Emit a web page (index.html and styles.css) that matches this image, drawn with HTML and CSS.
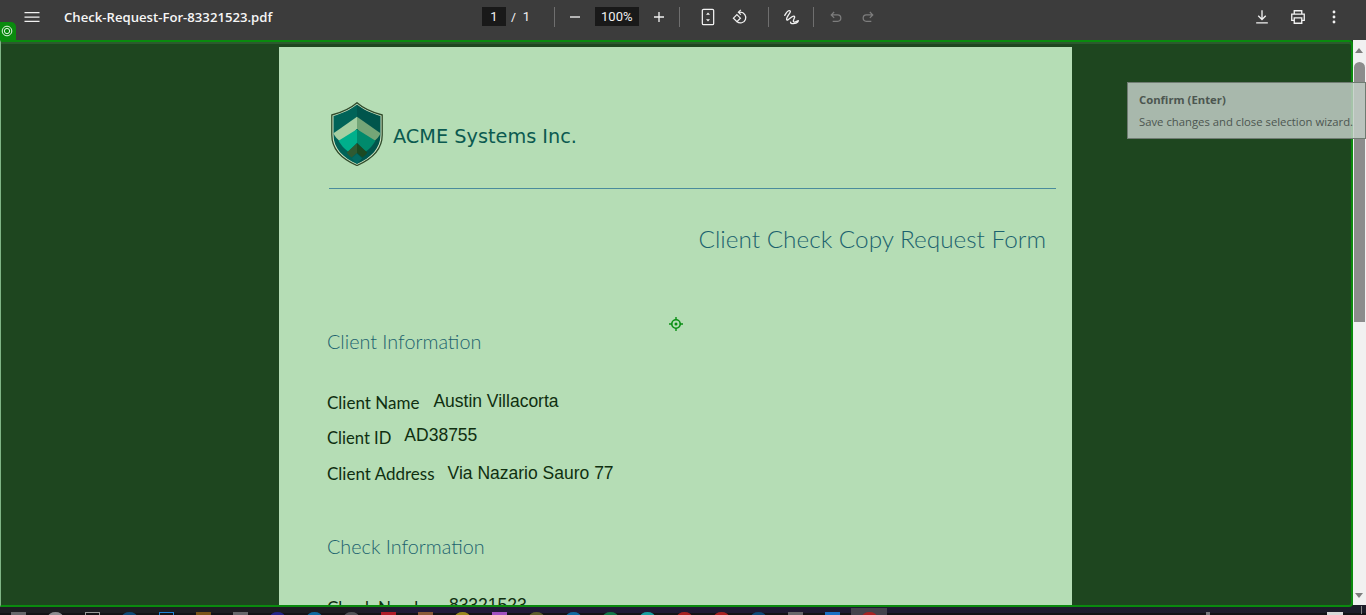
FILE: index.html
```html
<!DOCTYPE html>
<html lang="en">
<head>
    <meta charset="UTF-8">
    <title>Check-Request-For-83321523.pdf</title>
    <link rel="stylesheet" href="styles.css">
</head>
<body>
    <div class="app">
        <header class="toolbar">
            <div class="tb-left">
                <button class="tb-btn">
                    <svg viewBox="0 0 24 24"><path d="M3 6h18v1.5H3zM3 11.25h18v1.5H3zM3 16.5h18V18H3z" fill="currentColor"/></svg>
                </button>
                <span class="doc-title">Check-Request-For-83321523.pdf</span>
            </div>
            <div class="tb-mid">
                <span class="tb-input page-input">1</span>
                <span class="page-slash">/</span>
                <span class="page-total">1</span>
                <span class="tb-sep sep-zoom"></span>
                <button class="tb-btn">
                    <svg viewBox="0 0 24 24"><path d="M6 11.2h12v1.6H6z" fill="currentColor"/></svg>
                </button>
                <span class="tb-input zoom-input">100%</span>
                <button class="tb-btn">
                    <svg viewBox="0 0 24 24"><path d="M11.2 6h1.6v5.2H18v1.6h-5.2V18h-1.6v-5.2H6v-1.6h5.2z" fill="currentColor"/></svg>
                </button>
                <span class="tb-sep"></span>
                <button class="tb-btn">
                    <svg viewBox="0 0 24 24" fill="none" stroke="currentColor"><rect x="5.2" y="2.8" width="13.6" height="18.4" rx="1.5" stroke-width="1.5"/><path d="M12 6.5l-2.4 2.7h4.8zM12 17.5l-2.4-2.7h4.8z" fill="currentColor" stroke="none"/></svg>
                </button>
                <button class="tb-btn">
                    <svg viewBox="0 0 24 24" fill="none" stroke="currentColor" stroke-width="1.5"><path d="M10.5 6.3h2a6.4 6.4 0 1 1-4.2 11.2"/><path d="M13 3.4l-3 2.9 3 2.9" stroke-width="1.4"/><path d="M8.3 9.2l4.2 4.2-4.2 4.2-4.2-4.2z"/></svg>
                </button>
                <span class="tb-sep sep-draw"></span>
                <button class="tb-btn">
                    <svg viewBox="0 0 24 24" fill="none" stroke="currentColor" stroke-width="1.6" stroke-linecap="round" stroke-linejoin="round"><path d="M4.5 10C6.5 6.5 9 3.5 10.8 4.5c2.2 1.4-5 7.5-4 10.5.9 2.7 6-4.5 8.700-4 2.700.5-1.700 4.800-.5 6.500 1 1.400 5.800-1.200 5.800-1.200s-.2 3.700-5.800 3.700c-2 0-3.500-.8-3.500-1.800"/></svg>
                </button>
                <span class="tb-sep sep-undo"></span>
                <button class="tb-btn is-off">
                    <svg viewBox="0 0 24 24" fill="none" stroke="currentColor" stroke-width="1.5"><path d="M9.8 6L6.3 9.5l3.5 3.5M6.5 9.5H14a3.8 3.8 0 0 1 0 7.600H8"/></svg>
                </button>
                <button class="tb-btn is-off">
                    <svg viewBox="0 0 24 24" fill="none" stroke="currentColor" stroke-width="1.5"><path d="M14.2 6l3.500 3.500-3.500 3.500M17.500 9.500H10a3.800 3.800 0 0 0 0 7.600h6"/></svg>
                </button>
            </div>
            <div class="tb-right">
                <button class="tb-btn">
                    <svg viewBox="0 0 24 24" fill="none" stroke="currentColor" stroke-width="1.6"><path d="M12 4v10.500M7.500 10.500l4.500 4.500 4.500-4.500M5 19h14"/></svg>
                </button>
                <button class="tb-btn">
                    <svg viewBox="0 0 24 24" fill="none" stroke="currentColor" stroke-width="1.6"><path d="M7.500 8V4.500h9V8M7.500 16H4.500V8.500h15V16h-3"/><path d="M7.500 13h9v6.500h-9z"/></svg>
                </button>
                <button class="tb-btn">
                    <svg viewBox="0 0 24 24"><circle cx="12" cy="6" r="1.7" fill="currentColor"/><circle cx="12" cy="12" r="1.7" fill="currentColor"/><circle cx="12" cy="18" r="1.7" fill="currentColor"/></svg>
                </button>
            </div>
        </header>

        <main class="viewer">
            <div class="canvas">
                <article class="page">
                    <div class="brand">
                        <svg class="shield" viewBox="0 0 52 64">
                            <path d="M26 .7C20 6 10 10.500 .8 13V33c0 14 10 24 25.200 30.500C41 57 51.200 47 51.200 33V13C42 10.500 32 6 26 .7z" fill="#cfe6c4" stroke="#2f4a2a" stroke-width="1.300"/>
                            <path d="M26 2.500C20 7.500 11 11.500 2.500 14V33c0 13 9.500 23 23.500 29z" fill="#006358"/>
                            <path d="M26 2.500C32 7.500 41 11.500 49.500 14V33c0 13-9.500 23-23.500 29z" fill="#00554c"/>
                            <path d="M2.500 31.300L26 14.700v11.600L14 43C8 39 4.500 36 2.500 31.300z" fill="#a6cfa2"/>
                            <path d="M49.500 31.300L26 14.700v11.600L38 43c6-4 9.500-7 11.500-11.700z" fill="#74a577"/>
                            <path d="M7.500 38.700L26 27.300v13.400L17.300 49.700C13 46.500 10 43 7.500 38.700z" fill="#00b08c"/>
                            <path d="M44.500 38.700L26 27.300v13.400L34.700 49.700C39 46.500 42 43 44.500 38.700z" fill="#008a6c"/>
                            <path d="M15.700 50.500L26 41.300V51L20.500 55.500C18.500 54 17 52.500 15.700 50.500z" fill="#2f5a32"/>
                            <path d="M36.300 50.500L26 41.300V51L31.500 55.500C33.500 54 35 52.500 36.300 50.500z" fill="#1c4a22"/>
                            <path d="M21 56.300l5-4.800 5 4.800c-1.500 2-3 3.700-5 5.500-2-1.800-3.500-3.500-5-5.500z" fill="#046a62"/>
                        </svg>
                        <span class="brand-name">ACME Systems Inc.</span>
                    </div>
                    <div class="brand-rule"></div>
                    <h1 class="form-title">Client Check Copy Request Form</h1>

                    <h2 class="section-title first">Client Information</h2>
                    <div class="field field-name">
                        <span class="field-label">Client Name</span>
                        <span class="field-value">Austin Villacorta</span>
                    </div>
                    <div class="field field-id">
                        <span class="field-label">Client ID</span>
                        <span class="field-value">AD38755</span>
                    </div>
                    <div class="field field-address">
                        <span class="field-label">Client Address</span>
                        <span class="field-value">Via Nazario Sauro 77</span>
                    </div>

                    <h2 class="section-title second">Check Information</h2>
                    <div class="field field-check">
                        <span class="field-label">Check Number</span>
                        <span class="field-value">83321523</span>
                    </div>
                </article>
            </div>
            <div class="scrollbar">
                <span class="arrow-up"></span>
                <span class="thumb"></span>
                <span class="arrow-down"></span>
            </div>
        </main>

        <footer class="taskbar">
            <i class="tk grey"></i><i class="tk round white"></i><i class="tk box"></i><i class="tk round navy"></i>
            <i class="tk bluebox"></i><i class="tk orange"></i><i class="tk grey"></i><i class="tk round indigo"></i>
            <i class="tk round blue"></i><i class="tk round grey2"></i><i class="tk red"></i><i class="tk brown"></i>
            <i class="tk round yellow"></i><i class="tk purple"></i><i class="tk round olive"></i><i class="tk round blue"></i>
            <i class="tk round green"></i><i class="tk round teal"></i><i class="tk round red2"></i><i class="tk round red2"></i>
            <i class="tk round navy"></i><i class="tk grey"></i><i class="tk bluebox2"></i>
            <span class="tk-active"><i class="tk round red2"></i></span>
            <span class="tray"><i class="tray-mark"></i><i class="tray-clock"></i><i class="tray-end"></i></span>
        </footer>

        <!-- selection wizard overlay -->
        <div class="wizard-frame"></div>
        <div class="wizard-tab">
            <svg viewBox="0 0 16 16" fill="none" stroke="#fff"><circle cx="8" cy="8" r="5.5"/><circle cx="8" cy="8" r="3"/></svg>
        </div>
        <div class="crosshair">
            <svg viewBox="0 0 14 14" fill="none" stroke="#0a8f14"><circle cx="7" cy="7" r="4.2" stroke-width="1.6"/><circle cx="7" cy="7" r="1.5" fill="#0a8f14" stroke="none"/><path d="M7 0v3M7 11v3M0 7h3M11 7h3" stroke-width="1.4"/></svg>
        </div>
        <div class="tip">
            <div class="tip-title">Confirm (Enter)</div>
            <div class="tip-text">Save changes and close selection wizard.</div>
        </div>
    </div>
</body>
</html>
```

FILE: styles.css
```css
html, body {
    margin: 0;
    height: 100%;
    overflow: hidden;
}

.app {
    position: relative;
    display: flex;
    flex-direction: column;
    height: 100vh;
    background-color: #1b1a22;
    font-family: 'Open Sans', sans-serif;
}

/* toolbar */
.toolbar {
    flex: 0 0 40px;
    box-sizing: border-box;
    padding-bottom: 7px;
    display: flex;
    align-items: center;
    background-color: #3c3c3c;
    color: #f1f1f1;
}

.tb-left {
    flex: 0 0 482px;
    box-sizing: border-box;
    display: flex;
    align-items: center;
    padding-left: 16px;
}

.tb-mid {
    display: flex;
    align-items: center;
}

.tb-right {
    margin-left: auto;
    display: flex;
    align-items: center;
    gap: 4px;
    padding-right: 16px;
}

.tb-btn {
    width: 32px;
    height: 32px;
    padding: 6px;
    border: none;
    background: none;
    color: #f1f1f1;
    flex: none;
}

.tb-btn svg {
    display: block;
    width: 20px;
    height: 20px;
}

.is-off {
    color: #7d7d7d;
}

.doc-title {
    margin-left: 16px;
    font-size: 13.15px;
    font-weight: 600;
    color: #f6f6f6;
}

.tb-input {
    display: block;
    box-sizing: border-box;
    height: 19px;
    line-height: 19px;
    background-color: #191919;
    text-align: center;
    font-size: 13px;
    font-family: 'Roboto', sans-serif;
}

.page-input {
    width: 24px;
}

.zoom-input {
    width: 44px;
    margin: 0 4px;
}

.page-slash {
    margin-left: 5px;
    font-size: 13px;
}

.page-total {
    margin-left: 7px;
    width: 31px;
    font-size: 13px;
    font-family: 'Roboto', sans-serif;
}

.tb-sep {
    width: 1px;
    height: 20px;
    background-color: #6f6f6f;
    margin: 0 12px 0 4px;
    flex: none;
}

.sep-zoom {
    margin-left: 0;
    margin-right: 4px;
}

.sep-draw {
    margin: 0 6px 0 12px;
}

.sep-undo {
    margin: 0 6px;
}

/* viewer */
.viewer {
    flex: 0 0 565px;
    display: flex;
    min-height: 0;
}

.canvas {
    flex: 1;
    min-width: 0;
    overflow: hidden;
    display: flex;
    justify-content: center;
    padding: 7px 2px 0 0;
    background-color: #1e461f;
}

.page {
    flex: 0 0 793px;
    height: 900px;
    box-sizing: border-box;
    padding: 55px 16px 0 48px;
    background-color: #b5ddb5;
}

.brand {
    display: flex;
    align-items: center;
    margin-left: 4px;
}

.shield {
    width: 52px;
    height: 64px;
}

.brand-name {
    margin: 4px 0 0 10px;
    font-family: 'DejaVu Sans', sans-serif;
    font-size: 19.3px;
    color: #0b5a50;
}

.brand-rule {
    height: 1px;
    margin: 22px 0 0 2px;
    background-color: #4a8c9c;
}

.form-title {
    margin: 33px 10px 0 0;
    text-align: right;
    font-family: 'Lato', sans-serif;
    font-weight: 300;
    font-size: 24.35px;
    line-height: 34px;
    color: #1c626e;
}

.section-title {
    margin: 0;
    font-family: 'Lato', sans-serif;
    font-weight: 300;
    font-size: 19.8px;
    line-height: 26px;
    color: #1c626e;
}

.section-title.first {
    margin-top: 72px;
}

.section-title.second {
    margin-top: 48px;
}

.field {
    display: flex;
    align-items: flex-start;
    color: #0f2f10;
}

.field-name {
    margin-top: 37px;
}

.field-id {
    margin-top: 11px;
}

.field-address {
    margin-top: 13px;
}

.field-check {
    margin-top: 36px;
}

.field-label {
    margin-top: 1px;
    font-family: 'Lato', sans-serif;
    font-size: 17px;
    line-height: 22px;
}

.field-value {
    margin-left: 13px;
    font-family: 'Liberation Sans', sans-serif;
    font-size: 17.5px;
    line-height: 20px;
}

.field-name .field-value {
    margin-left: 14px;
}

.field-id .field-label {
    margin-top: 2px;
    font-size: 16.6px;
}

.field-address .field-value {
    margin-top: 1px;
}

.field-check .field-label {
    margin-top: 2px;
}

.field-check .field-value {
    margin-left: 10px;
}

/* scrollbar */
.scrollbar {
    flex: 0 0 13px;
    position: relative;
    background-color: #f1f1f1;
}

.thumb {
    position: absolute;
    left: 1px;
    right: 1px;
    top: 22px;
    height: 260px;
    border-radius: 6px 6px 0 0;
    background-color: #8c8c8c;
}

.arrow-up,
.arrow-down {
    position: absolute;
    left: 2px;
    width: 0;
    height: 0;
    border-left: 4.5px solid transparent;
    border-right: 4.5px solid transparent;
}

.arrow-up {
    top: 8px;
    border-bottom: 5px solid #7d7d7d;
}

.arrow-down {
    bottom: 7px;
    border-top: 5px solid #7d7d7d;
}

/* taskbar, only its top row is in view */
.taskbar {
    flex: 1;
    display: flex;
    overflow: hidden;
    padding-top: 7px;
    background:
        linear-gradient(transparent 8px, #131316 8px),
        linear-gradient(90deg, #1d1d22 0, #1d1d22 340px, #211a3a 420px, #1e1a30 900px, #1d1d2a 100%);
}

.tk {
    display: block;
    flex: none;
    width: 15px;
    height: 10px;
    margin: 0 11px;
}

.tk.round {
    border-radius: 50%;
}

.grey { background-color: #66666a; }
.white { background-color: #8c8c90; }
.box { border: 1px solid #999; box-sizing: border-box; }
.navy { background-color: #0f4a78; }
.indigo { background-color: #26268a; }
.blue { background-color: #0f6aa0; }
.grey2 { background-color: #55555a; }
.bluebox { border: 1px solid #1e82d8; box-sizing: border-box; }
.bluebox2 { background-color: #1a6fc4; }
.orange { background-color: #7a5418; }
.red { background-color: #b01c28; }
.red2 { background-color: #a82222; }
.brown { background-color: #8a5a38; }
.yellow { background-color: #9a8a20; }
.purple { background-color: #a050c0; }
.olive { background-color: #5e5e2c; }
.green { background-color: #14784a; }
.teal { background-color: #18a0a0; }

.tk-active {
    display: flex;
    justify-content: center;
    flex: none;
    width: 36px;
    margin-top: -4px;
    padding-top: 4px;
    background-color: #44424c;
}

.tk-active .tk {
    margin: 0;
}

.tray {
    margin-left: auto;
    display: flex;
}

.tray-mark {
    display: block;
    width: 4px;
    height: 6px;
    margin-right: 117px;
    background-color: #77777c;
}

.tray-clock {
    display: block;
    width: 16px;
    height: 6px;
    margin-right: 18px;
    background-color: #d8d8d8;
}

.tray-end {
    display: block;
    width: 1px;
    height: 8px;
    margin: -6px 4px 0 0;
    background-color: #888;
}

/* selection wizard overlay */
.wizard-frame {
    position: absolute;
    left: 0;
    top: 40px;
    width: 1353px;
    height: 567px;
    box-sizing: border-box;
    border: 2px solid #0a8a0e;
    border-left: 1px solid #7fb585;
    border-radius: 0 4px 4px 0;
    box-shadow: inset 0 2px 0 #2c5a2e;
    pointer-events: none;
}

.wizard-tab {
    position: absolute;
    left: 0;
    top: 22px;
    width: 16px;
    height: 18px;
    background-color: #0a8a0e;
    border-radius: 0 5px 0 0;
}

.wizard-tab svg {
    display: block;
    width: 14px;
    height: 14px;
    margin: 2px 0 0 0;
}

.crosshair {
    position: absolute;
    left: 669px;
    top: 317px;
    width: 14px;
    height: 14px;
}

.crosshair svg {
    display: block;
}

.tip {
    position: absolute;
    left: 1127px;
    top: 82px;
    width: 239px;
    height: 57px;
    box-sizing: border-box;
    padding: 9px 0 0 11px;
    border: 1px solid #6f7b72;
    background-color: rgba(195, 206, 199, 0.84);
    color: #4c5650;
    font-family: 'Open Sans', sans-serif;
    font-size: 11.3px;
    line-height: 15px;
}

.tip-title {
    font-weight: 700;
}

.tip-text {
    margin-top: 7px;
    white-space: nowrap;
}
```
